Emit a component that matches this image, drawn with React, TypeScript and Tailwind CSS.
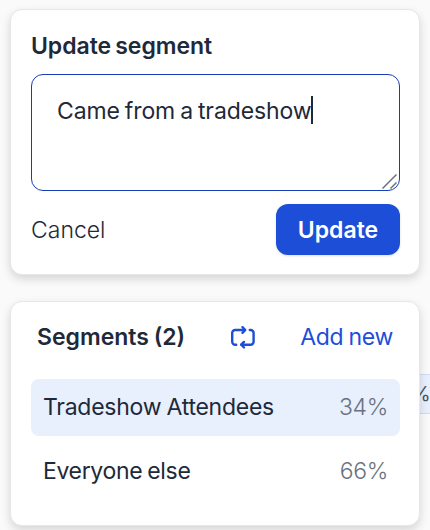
import { useState } from "react";
import clsx from "clsx";

type Segment = {
    id: string;
    name: string;
    share: string;
    nameClass: string;
};

const segments: Segment[] = [
    { id: "tradeshow", name: "Tradeshow Attendees", share: "34%", nameClass: "tracking-[-0.25px] [word-spacing:-1px]" },
    { id: "everyone", name: "Everyone else", share: "66%", nameClass: "tracking-[-0.35px] [word-spacing:-1px]" },
];

function SwapIcon() {
    return (
        <svg
            width="26"
            height="26"
            viewBox="0 0 26 26"
            fill="none"
            stroke="currentColor"
            strokeWidth="2.4"
            strokeLinecap="round"
            strokeLinejoin="round"
        >
            <path d="M6.2 20.7H5.2A3 3 0 0 1 2.2 17.7V9A3 3 0 0 1 5.2 6H14.8" />
            <path d="M12.5 3.2L15.3 6L12.5 8.8" />
            <path d="M19.8 6H20.6A3 3 0 0 1 23.6 9V17.7A3 3 0 0 1 20.6 20.7H11.5" />
            <path d="M14 17.9L11.2 20.7L14 23.5" />
        </svg>
    );
}

function UpdateSegment() {
    return (
        <section className="h-[266px] rounded-xl border border-gray-200 bg-white pt-5 pr-[19px] pl-5 shadow-[0_4px_10px_rgba(0,0,0,0.15)]">
            <h2 className="h-11 pt-px text-[23px] leading-[30px] font-semibold tracking-[-0.05px] [word-spacing:-1.5px] whitespace-nowrap">
                Update segment
            </h2>
            <div
                role="textbox"
                className="relative h-[117px] rounded-xl border border-blue-800 pt-[21px] pl-[25px]"
            >
                <div className="flex h-7 items-center">
                    <span className="pt-0.5 text-[23px] leading-7 tracking-[-0.1px] [word-spacing:-1.4px] whitespace-nowrap">
                        Came from a tradeshow
                    </span>
                    <span className="-ml-px h-7 w-0.5 bg-gray-800" />
                </div>
                {/* resize grip */}
                <svg
                    className="absolute right-0.5 bottom-px text-gray-500"
                    width="15"
                    height="15"
                    viewBox="0 0 15 15"
                    stroke="currentColor"
                    strokeWidth="1.5"
                >
                    <path d="M0.5 14.5L14.5 0.5M8.5 14.5L14.5 8.5" />
                </svg>
            </div>
            <div className="mt-[13px] flex h-[51px] items-center justify-between">
                <button className="pt-0.5 text-[23px] font-light">Cancel</button>
                <button className="h-[51px] w-[124px] rounded-xl bg-[#1d4ed8] pt-0.5 text-[23px] font-semibold text-white shadow-sm">
                    Update
                </button>
            </div>
        </section>
    );
}

function SegmentList() {
    const [selected, setSelected] = useState("tradeshow");

    return (
        <section className="h-[225px] rounded-xl border border-gray-200 bg-white pt-4 pr-[19px] pl-5 shadow-[0_4px_10px_rgba(0,0,0,0.15)]">
            <header className="flex h-[37px] items-center pr-[7px] pl-1.5">
                <h2 className="w-[193px] pt-0.5 text-[23px] font-semibold [word-spacing:-1px] whitespace-nowrap">Segments (2)</h2>
                <button className="text-[#1d4ed8]">
                    <SwapIcon />
                </button>
                <button className="ml-auto pt-0.5 text-[23px] tracking-[-0.3px] text-[#1d4ed8] [word-spacing:-1px]">
                    Add new
                </button>
            </header>
            <ul className="mt-6 flex flex-col gap-[7px]">
                {segments.map((segment) => (
                    <li
                        key={segment.id}
                        onClick={() => setSelected(segment.id)}
                        className={clsx(
                            "flex h-[57px] items-center justify-between rounded-lg pr-3 pl-3 text-[23px] whitespace-nowrap",
                            selected === segment.id && "bg-[#e8effd]"
                        )}
                    >
                        <span className={segment.nameClass}>{segment.name}</span>
                        <span className="font-light tracking-[-0.3px] text-gray-500">{segment.share}</span>
                    </li>
                ))}
            </ul>
        </section>
    );
}

export default function App() {
    return (
        <main className="relative h-[530px] w-[430px] overflow-hidden bg-[#fafafa] font-['Inter',sans-serif] text-gray-800">
            {/* edge of the node behind the panels */}
            <div className="absolute top-[374px] left-[400px] flex h-10 w-12 items-center border border-[#cfdcf8] bg-[#e8effd] pl-2.5 text-xl text-gray-600">
                %
            </div>
            <div className="relative flex flex-col gap-[26px] px-2.5 pt-[9px]">
                <UpdateSegment />
                <SegmentList />
            </div>
        </main>
    );
}
